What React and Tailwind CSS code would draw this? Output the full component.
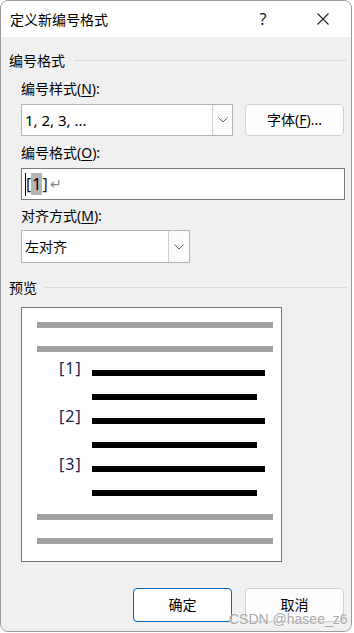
import React from "react";

const Chevron = () => (
  <svg width="10" height="6" viewBox="0 0 10 6">
    <path d="M0.5 0.5 L5 5 L9.5 0.5" fill="none" stroke="#5f5f5f" strokeWidth="1" />
  </svg>
);

const U = ({ children }) => (
  <span className="underline underline-offset-[2px] decoration-1">{children}</span>
);

const GrayBar = () => <div className="ml-[15px] w-[236px] h-[6px] bg-[#a0a0a0] shrink-0" />;

const NumRow = ({ n }) => (
  <>
    <div className="flex items-center h-[6px] shrink-0">
      <div className="ml-[37px] w-[33px] mb-[10px] text-[16px] leading-[17px] tracking-[1px] text-[#14224a] font-['Noto_Sans',sans-serif]">
        [{n}]
      </div>
      <div className="w-[173px] h-[6px] bg-black" />
    </div>
    <div className="ml-[70px] w-[165px] h-[6px] bg-black shrink-0" />
  </>
);

export default function App() {
  return (
    <div className="w-[354px] h-[633px] bg-white font-['Noto_Sans','Noto_Sans_CJK_SC',sans-serif] text-[14px] text-black">
      <div className="relative w-[352px] h-[632px] border border-[#9a9a9a] rounded-[8px] overflow-hidden flex flex-col">
        {/* Title bar */}
        <div className="h-[36px] bg-white flex items-center shrink-0">
          <div className="pl-[9px] text-[14px] leading-[20px] font-['Noto_Sans_CJK_SC',sans-serif]">定义新编号格式</div>
          <div className="flex-1" />
          <div className="w-[20px] text-center text-[16px] leading-[20px] text-[#202020] mr-[44px]">?</div>
          <svg width="12" height="12" viewBox="0 0 12 12" className="mr-[22px]">
            <path d="M0.5 0.5 L11.5 11.5 M11.5 0.5 L0.5 11.5" stroke="#222" strokeWidth="1.1" />
          </svg>
        </div>

        {/* Body */}
        <div className="flex-1 bg-[#f0f0f0] flex flex-col pt-[13px]">
          <div className="flex items-center h-[20px] pl-[8px] pr-[4px]">
            <span className="leading-[20px] font-['Noto_Sans_CJK_SC',sans-serif]">编号格式</span>
            <div className="flex-1 h-px bg-[#d8d8d8] ml-[9px]" />
          </div>

          <div className="mt-[9px] ml-[20px] h-[20px] leading-[20px]">
            编号样式(<U>N</U>):
          </div>

          <div className="mt-[5px] flex">
            <div className="ml-[20px] w-[212px] h-[32px] border border-[#b4b4b4] bg-white flex">
              <div className="flex-1 flex items-center pl-[3px] leading-[20px] text-[15px]">1, 2, 3, ...</div>
              <div className="w-[20px] border-l border-[#cfcfcf] bg-[#fbfbfb] flex items-center justify-center">
                <Chevron />
              </div>
            </div>
            <div className="ml-[12px] w-[99px] h-[32px] border border-[#d0d0d0] rounded-[4px] bg-[#fdfdfd] flex items-center justify-center leading-[20px]">
              字体(<U>F</U>)...
            </div>
          </div>

          <div className="mt-[7px] ml-[20px] h-[20px] leading-[20px]">
            编号格式(<U>O</U>):
          </div>

          <div className="mt-[5px] ml-[20px] w-[324px] h-[32px] border border-[#7a7a7a] bg-white flex items-center pl-[3px] text-[16px] leading-[22px]">
            <span className="w-px h-[23px] bg-black" />
            <span className="text-[#1a1a1a]">[</span>
            <span className="bg-[#b4b4b4] px-[1px]">1</span>
            <span className="text-[#3a1a1a]">]</span>
            <span className="text-[#8a8a8a] ml-[2px] text-[14px]">↵</span>
          </div>

          <div className="mt-[6px] ml-[20px] h-[20px] leading-[20px]">
            对齐方式(<U>M</U>):
          </div>

          <div className="mt-[4px] ml-[20px] w-[169px] h-[33px] border border-[#b4b4b4] bg-white flex">
            <div className="flex-1 flex items-center pl-[3px] leading-[20px]">左对齐</div>
            <div className="w-[21px] border-l border-[#cfcfcf] bg-[#fbfbfb] flex items-center justify-center">
              <Chevron />
            </div>
          </div>

          <div className="mt-[14px] flex items-center h-[20px] pl-[8px] pr-[4px]">
            <span className="leading-[20px] font-['Noto_Sans_CJK_SC',sans-serif]">预览</span>
            <div className="flex-1 h-px bg-[#d8d8d8] ml-[8px]" />
          </div>

          <div className="mt-[10px] ml-[20px] w-[261px] h-[255px] border border-[#767676] bg-white pt-[14px] flex flex-col gap-[18px]">
            <GrayBar />
            <GrayBar />
            <NumRow n={1} />
            <NumRow n={2} />
            <NumRow n={3} />
            <GrayBar />
            <GrayBar />
          </div>

          <div className="mt-[26px] flex justify-end gap-[13px] pr-[7px]">
            <div className="w-[99px] h-[34px] border border-[#0067c0] rounded-[4px] bg-white flex items-center justify-center leading-[20px]">
              确定
            </div>
            <div className="w-[99px] h-[34px] border border-[#d0d0d0] rounded-[4px] bg-[#fdfdfd] flex items-center justify-center leading-[20px]">
              取消
            </div>
          </div>
        </div>

        {/* Watermark */}
        <div className="absolute left-[228px] top-[610px] text-[14px] leading-[16px] text-[#a8a8a8] font-['Liberation_Sans',sans-serif] [text-shadow:0_0_1px_#ffffff]">
          CSDN @hasee_z6
        </div>
      </div>
    </div>
  );
}
